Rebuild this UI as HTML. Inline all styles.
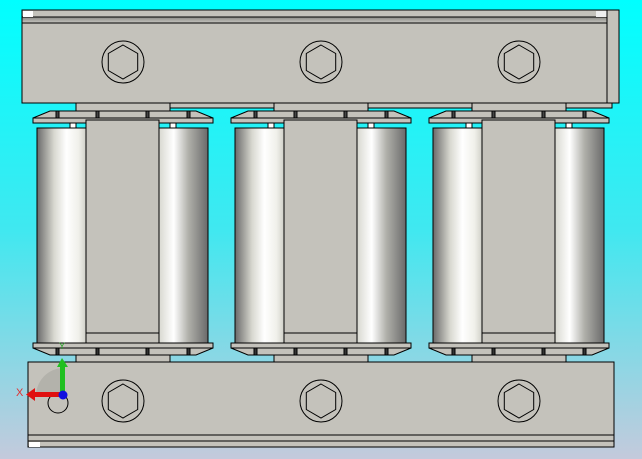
<html><head><style>body{margin:0;overflow:hidden}</style></head><body>
<svg width="642" height="459" viewBox="0 0 642 459" xmlns="http://www.w3.org/2000/svg" font-family="Liberation Sans, sans-serif">
<defs>
<linearGradient id="bg" x1="0" y1="0" x2="0" y2="1"><stop offset="0" stop-color="#00ffff"/><stop offset="0.5" stop-color="#40e8f0"/><stop offset="1" stop-color="#c4cadc"/></linearGradient>
<linearGradient id="cl" x1="0" x2="1"><stop offset="0" stop-color="#6a6a6a"/><stop offset="0.35" stop-color="#d8d8d0"/><stop offset="0.6" stop-color="#ffffff"/><stop offset="0.85" stop-color="#f0f0ea"/><stop offset="1" stop-color="#d0d0c8"/></linearGradient>
<linearGradient id="cr" x1="0" x2="1"><stop offset="0" stop-color="#d8d8d0"/><stop offset="0.3" stop-color="#ffffff"/><stop offset="0.6" stop-color="#b0b0aa"/><stop offset="1" stop-color="#6a6a6a"/></linearGradient>
<linearGradient id="band" x1="0" y1="0" x2="0" y2="1"><stop offset="0" stop-color="#8a8a86"/><stop offset="1" stop-color="#c8c6c0"/></linearGradient>
<g id="mod" stroke="#000" stroke-width="1" fill="#c4c2bb">
<rect x="76" y="103" width="94" height="8"/>
<polygon points="33,118 50,111 196,111 213,118"/>
<rect x="33" y="118" width="180" height="5"/>
<rect x="56" y="111" width="3" height="7" fill="#444"/><rect x="96" y="111" width="3" height="7" fill="#444"/><rect x="146" y="111" width="3" height="7" fill="#444"/><rect x="187" y="111" width="3" height="7" fill="#444"/>
<rect x="37" y="128" width="49" height="215" fill="url(#cl)"/>
<rect x="159" y="128" width="49" height="215" fill="url(#cr)"/>
<rect x="70" y="123" width="6" height="5" fill="#fff"/><rect x="170" y="123" width="6" height="5" fill="#fff"/>
<rect x="86" y="120" width="73" height="223"/>
<line x1="86" y1="333" x2="159" y2="333"/>
<rect x="33" y="343" width="180" height="5"/>
<polygon points="33,348 213,348 196,355 50,355"/>
<rect x="56" y="348" width="3" height="7" fill="#333"/><rect x="96" y="348" width="3" height="7" fill="#333"/><rect x="146" y="348" width="3" height="7" fill="#333"/><rect x="187" y="348" width="3" height="7" fill="#333"/>
<rect x="76" y="355" width="94" height="7"/>
</g>
<g id="hex" fill="none" stroke="#000" stroke-width="1">
<circle r="21"/><polygon points="0,-17 14.7,-8.5 14.7,8.5 0,17 -14.7,8.5 -14.7,-8.5"/>
</g>
</defs>
<rect width="642" height="459" fill="url(#bg)"/>
<g stroke="#000" stroke-width="1" fill="#c4c2bb">
<rect x="170" y="103" width="442" height="5"/>
<rect x="22" y="10" width="597" height="93"/>
<rect x="22" y="17" width="585" height="6" fill="url(#band)"/>
<rect x="23" y="11" width="10" height="6" fill="#fff" stroke="none"/>
<rect x="596" y="11" width="11" height="6" fill="#eee" stroke="none"/>
<line x1="607" y1="10" x2="607" y2="103"/>
</g>
<use href="#mod"/><use href="#mod" x="198"/><use href="#mod" x="396"/>
<g stroke="#000" stroke-width="1" fill="#c4c2bb">
<rect x="28" y="362" width="586" height="85"/>
<line x1="28" y1="435" x2="614" y2="435"/>
<line x1="28" y1="441" x2="614" y2="441"/>
<rect x="29" y="442" width="11" height="5" fill="#fff" stroke="none"/>
</g>
<use href="#hex" x="123" y="62"/><use href="#hex" x="321" y="62"/><use href="#hex" x="519" y="62"/>
<use href="#hex" x="123" y="401"/><use href="#hex" x="321" y="401"/><use href="#hex" x="519" y="401"/>
<path d="M63,368 A28,28 0 0 0 36,395 L63,395 Z" fill="#a8a6a0" opacity="0.6"/>
<circle cx="58" cy="403" r="10" fill="none" stroke="#000"/>
<rect x="60" y="365" width="5" height="30" fill="#20c020"/><polygon points="57,367 62,358 68,367" fill="#20c020"/>
<rect x="34" y="392" width="28" height="5" fill="#e01010"/><polygon points="35,388 26,394.5 35,401" fill="#e01010"/>
<circle cx="63" cy="395" r="4.5" fill="#1010e0"/>
<text x="16" y="396" font-size="11" fill="#e03030">X</text>
<text x="59" y="349" font-size="9" fill="#20a020">Y</text>
</svg>
</body></html>
